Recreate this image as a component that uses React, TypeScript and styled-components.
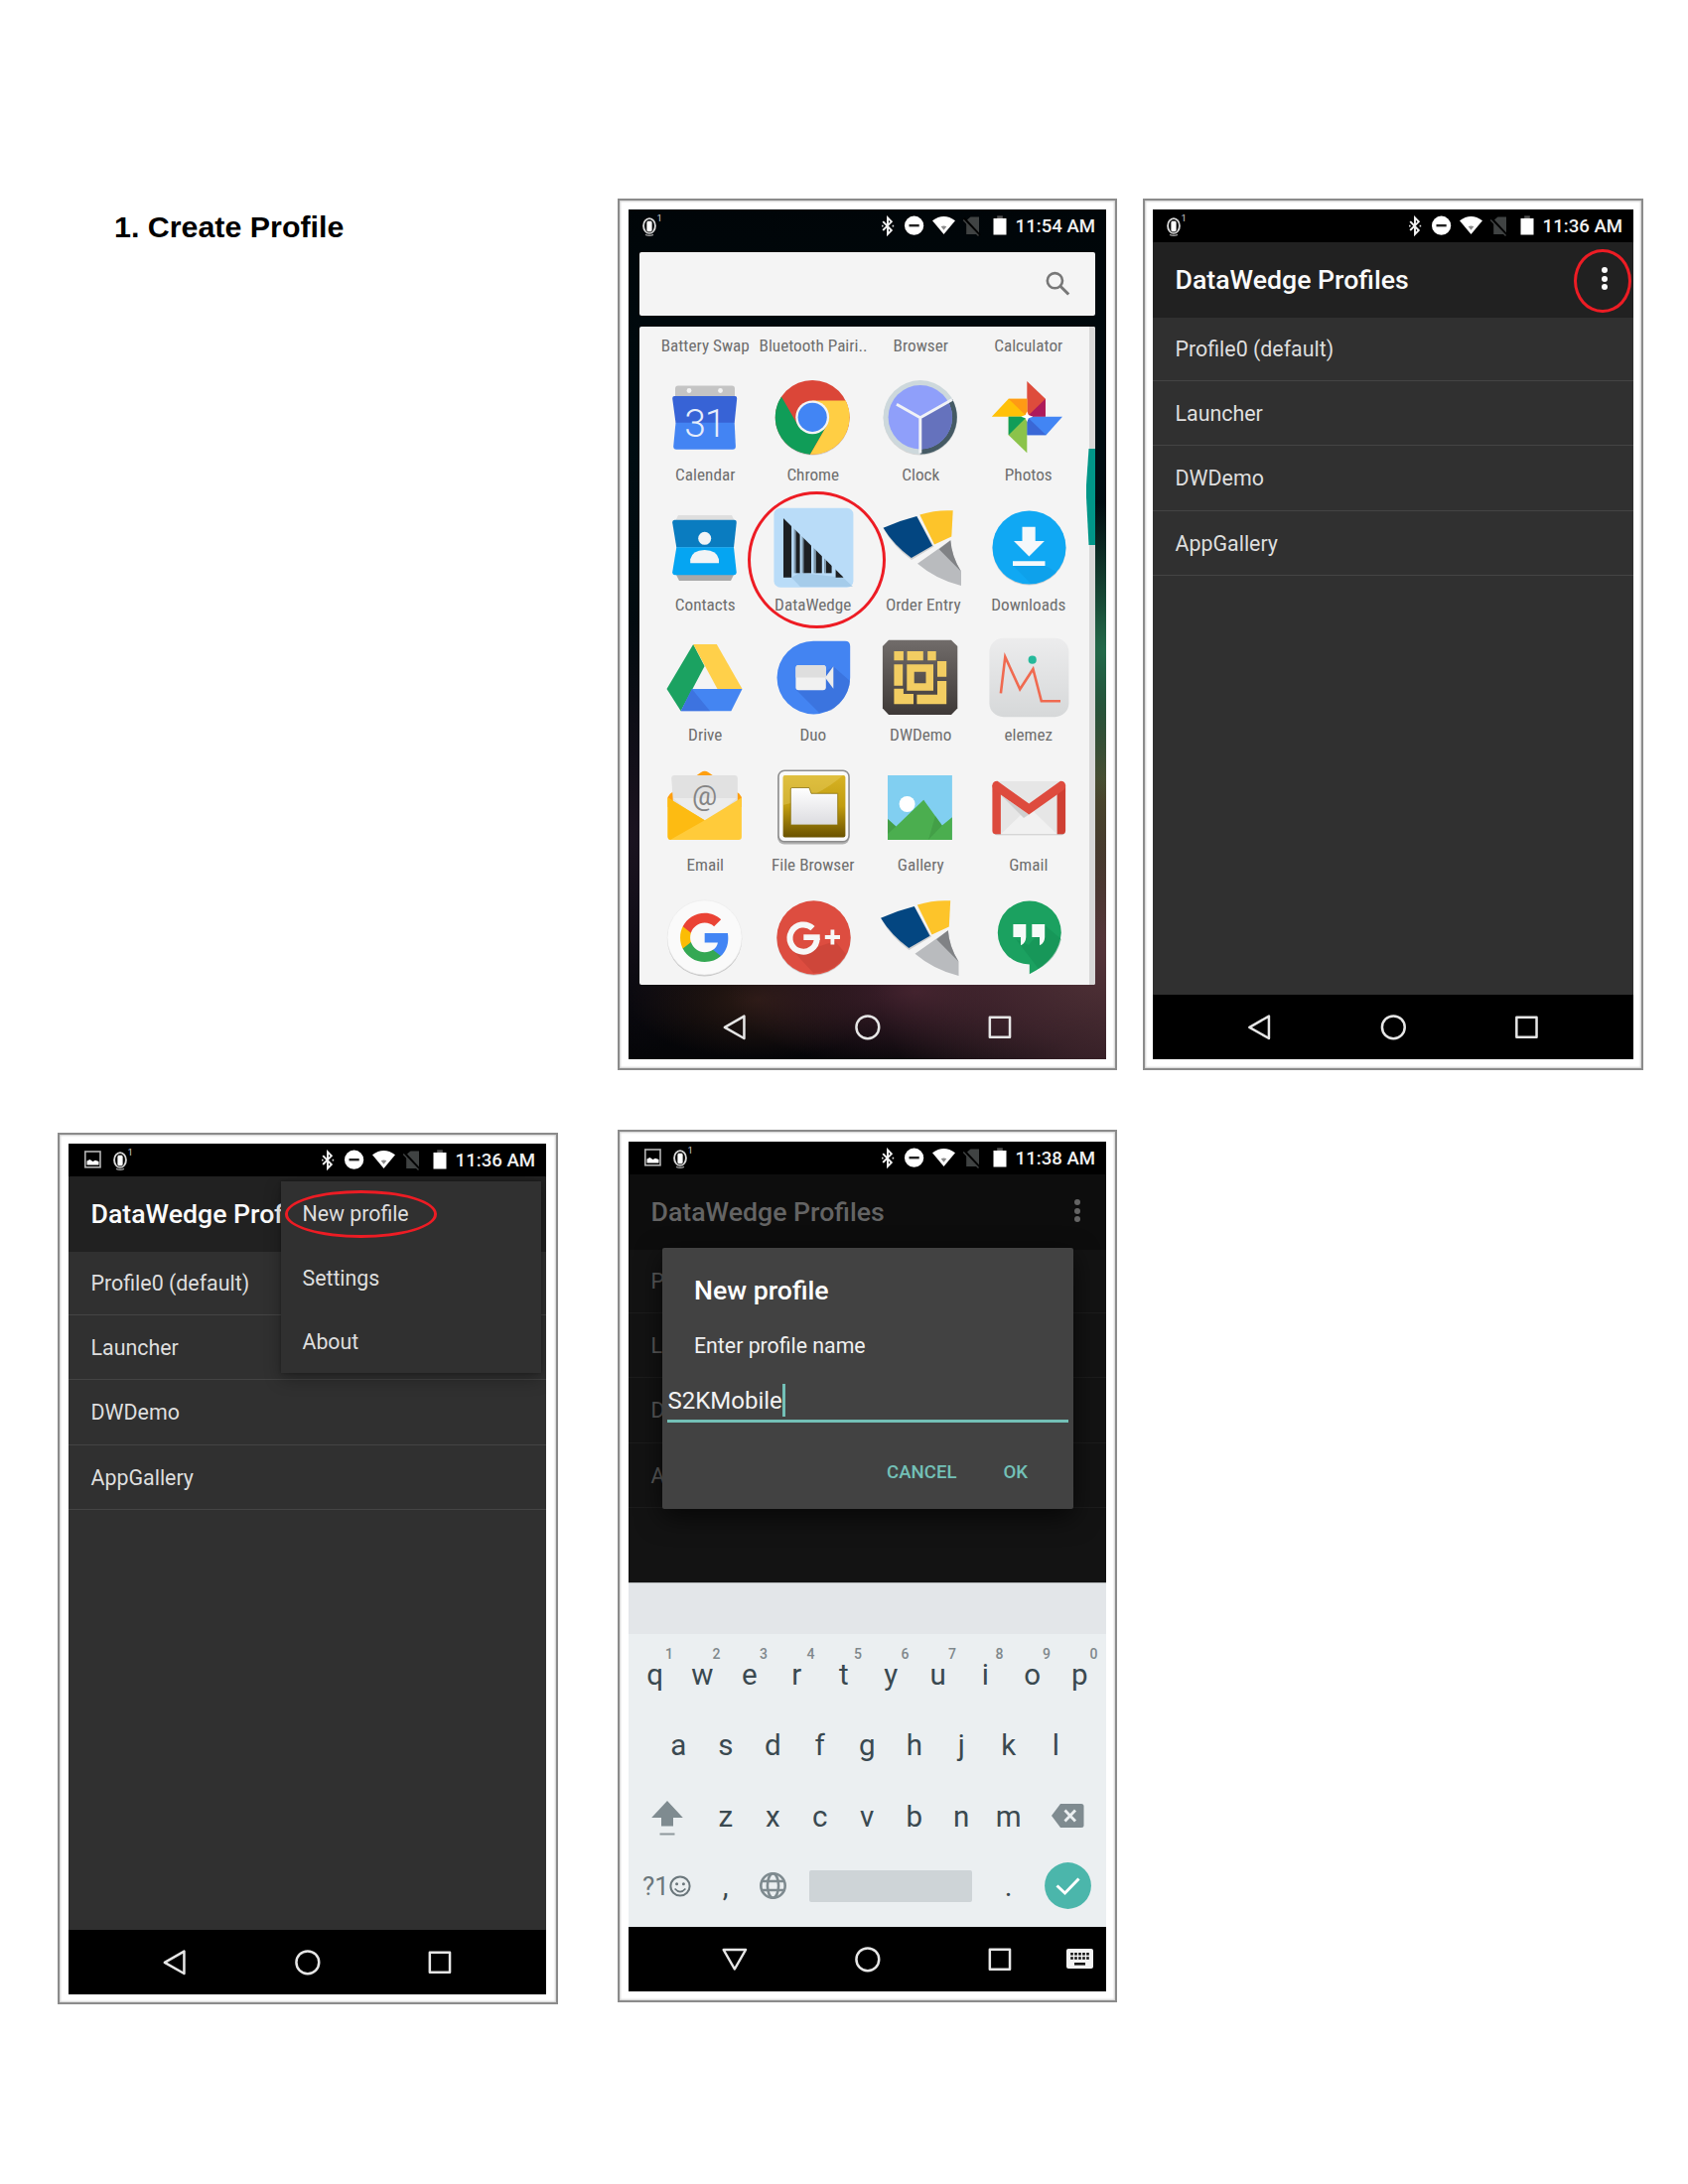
import React from "react";
import styled, { createGlobalStyle, css } from "styled-components";

const GlobalStyle = createGlobalStyle`
  html, body { margin: 0; padding: 0; background: #fff; }
  *, *::before, *::after { box-sizing: border-box; }
`;

const RED = "#ed1c24";

/* ---------- page ---------- */

const Page = styled.main`
  width: 1700px;
  height: 2200px;
  padding: 200px 0 0 58px;
  display: grid;
  grid-template-columns: 564px 529px 504px;
  grid-template-rows: 938px 881px;
  align-items: start;
  justify-items: start;
  background: #fff;
  overflow: hidden;
  font-family: Roboto, "Liberation Sans", sans-serif;
`;

const StepTitle = styled.h1`
  margin: 0;
  padding: 10px 0 0 57px;
  font: 700 30.4px/36px "Liberation Sans", Arial, sans-serif;
  color: #000;
  white-space: nowrap;
`;

const Frame = styled.figure<{ $pad: string; $drop?: number }>`
  margin: ${(p) => p.$drop ?? 0}px 0 0;
  border: 2px solid #8b8b8b;
  padding: ${(p) => p.$pad};
  background: #fff;
  box-shadow: inset 0 0 2px 1px #cfcfcf;
`;

const Screen = styled.section<{ $w: number; $h?: number; $bg?: string }>`
  position: relative;
  width: ${(p) => p.$w}px;
  height: ${(p) => p.$h ?? 856}px;
  display: flex;
  flex-direction: column;
  overflow: hidden;
  background: ${(p) => p.$bg ?? "#303030"};
`;

const Ring = styled.span<{ $x: number; $y: number; $w: number; $h: number }>`
  position: absolute;
  z-index: 5;
  left: ${(p) => p.$x}px;
  top: ${(p) => p.$y}px;
  width: ${(p) => p.$w}px;
  height: ${(p) => p.$h}px;
  border: 3px solid ${RED};
  border-radius: 50%;
`;

/* ---------- status bar ---------- */

const StatusRow = styled.header<{ $clear?: boolean }>`
  flex: none;
  height: 32.5px;
  padding: 2px 11px 0 12px;
  display: flex;
  align-items: center;
  justify-content: space-between;
  background: ${(p) => (p.$clear ? "transparent" : "#000")};
  color: #f2f2f2;
`;

const StatusGroup = styled.div`
  display: flex;
  align-items: center;
  height: 100%;
`;

const Slot = styled.span<{ $w?: number }>`
  width: ${(p) => p.$w ?? 28.3}px;
  height: 24px;
  display: flex;
  justify-content: center;
  align-items: center;
  svg { display: block; overflow: visible; }
`;

const Clock = styled.time`
  width: 82px;
  text-align: right;
  font-size: 18.6px;
  line-height: 24px;
  font-weight: 500;
  white-space: nowrap;
`;

function StatusBar({ time, picture, clear }: { time: string; picture?: boolean; clear?: boolean }) {
  return (
    <StatusRow $clear={clear}>
      <StatusGroup>
        {picture && (
          <Slot $w={31}>
            <svg width="31" height="24" viewBox="0 0 31 24">
              <rect x="4.800" y="3" width="15.200" height="15.800" fill="none" stroke="#b5b5b5" strokeWidth="1.600" />
              <path d="M6.500 16.500v-4l3-1.500 3 2 2.500-1.200 3.500 1.200v3.500z" fill="#fff" />
            </svg>
          </Slot>
        )}
        <Slot $w={24}>
          <svg width="24" height="24" viewBox="0 0 24 24">
            <ellipse cx="9" cy="11.500" rx="5.900" ry="7.400" fill="none" stroke="#d9d9d9" strokeWidth="1.900" />
            <path d="M5 20.300q4 1.800 8 0" fill="none" stroke="#9a9a9a" strokeWidth="1.400" />
            <rect x="6" y="6.300" width="6" height="11.500" rx="1.900" fill="#fff" stroke="#111" strokeWidth="0.800" />
            <text x="16.500" y="7.200" fontSize="9.500" fill="#cfcfcf" fontFamily="Roboto">1</text>
          </svg>
        </Slot>
      </StatusGroup>
      <StatusGroup>
        <Slot>
          <svg width="12" height="20" viewBox="0 0 12 20">
            <path d="M1.200 5.200 9.800 14 6 17.900V1.400L9.800 5.300 1.200 14" fill="none" stroke="#f4f4f4" strokeWidth="1.900" />
            <path d="M0 9.600h1.600M10.600 9.600h1.600" stroke="#d8d8d8" strokeWidth="1.900" />
          </svg>
        </Slot>
        <Slot>
          <svg width="22" height="20" viewBox="0 0 22 20">
            <circle cx="9.600" cy="9.200" r="9.600" fill="#fff" />
            <rect x="4.500" y="8" width="10.200" height="2.400" fill="#222" />
          </svg>
        </Slot>
        <Slot>
          <svg width="23" height="20" viewBox="0 0 23 20">
            <path d="M0 4.200Q11.500-4.400 23 4.200L11.500 18z" fill="#fff" />
            <path d="M8.700 10.300q2.800-1.600 5.600 0l-2.800 3.400z" fill="#8b8b8b" />
          </svg>
        </Slot>
        <Slot>
          <svg width="18" height="20" viewBox="0 0 18 20">
            <path d="M4.500 3 7.500.500H16V18H3.200V4.500z" fill="#404343" />
            <path d="M.8 2 16.800 19.200" stroke="#000" strokeWidth="2.600" />
            <path d="M.2 3.400 15.500 19.400" stroke="#404343" strokeWidth="1.400" />
          </svg>
        </Slot>
        <Slot>
          <svg width="14" height="20" viewBox="0 0 14 20">
            <rect x="4.200" y="-.6" width="5.600" height="3" fill="#555" />
            <rect x=".5" y="2" width="13" height="16.500" fill="#fff" />
          </svg>
        </Slot>
        <Clock>{time}</Clock>
      </StatusGroup>
    </StatusRow>
  );
}

/* ---------- navigation bar ---------- */

const NavRow = styled.nav<{ $clear?: boolean }>`
  position: relative;
  flex: none;
  height: 65px;
  margin-top: auto;
  padding: 0 40px;
  display: flex;
  align-items: center;
  background: ${(p) => (p.$clear ? "transparent" : "#000")};
  > svg { flex: 1; height: 28px; min-width: 0; }
`;

const ImeSwitch = styled.span`
  position: absolute;
  right: 13px;
  top: 22px;
  svg { display: block; }
`;

function NavBar({ ime, clear }: { ime?: boolean; clear?: boolean }) {
  const line = { fill: "none", stroke: "#e6e6e6", strokeWidth: 2.5, strokeLinejoin: "round" as const };
  return (
    <NavRow $clear={clear}>
      <svg viewBox="0 0 28 28">
        {ime ? <path d="M2.800 4h22.400L14 23.500z" {...line} /> : <path d="M23.600 2.600v22.400L4 13.800z" {...line} />}
      </svg>
      <svg viewBox="0 0 28 28"><circle cx="14" cy="13.800" r="11.400" {...line} /></svg>
      <svg viewBox="0 0 28 28"><rect x="4" y="3.800" width="20.200" height="20" {...line} /></svg>
      {ime && (
        <ImeSwitch>
          <svg width="27" height="20" viewBox="0 0 27 20">
            <rect x="0" y="0" width="27" height="20" rx="2" fill="#f2f2f2" />
            {[4, 8, 12, 16, 20].map((x) => (
              <React.Fragment key={x}>
                <rect x={x + 0.2} y="4" width="2.600" height="2.600" fill="#111" />
                <rect x={x + 0.2} y="8.200" width="2.600" height="2.600" fill="#111" />
              </React.Fragment>
            ))}
            <rect x="8" y="14" width="11" height="2.600" fill="#111" />
          </svg>
        </ImeSwitch>
      )}
    </NavRow>
  );
}

/* ---------- launcher ---------- */

const Wallpaper = css`
  background:
    radial-gradient(ellipse 150px 150px at 100% 52%, #236a4a 0%, rgba(35, 106, 74, 0.55) 45%, transparent 100%),
    radial-gradient(ellipse 160px 170px at 100% 67%, #4d4a2e 0%, transparent 100%),
    radial-gradient(ellipse 260px 240px at 104% 86%, #5a383d 0%, rgba(78, 45, 54, 0.7) 50%, transparent 100%),
    radial-gradient(ellipse 190px 80px at 60% 92%, #40202c 0%, transparent 100%),
    radial-gradient(ellipse 130px 60px at 27% 93%, #2b1a14 0%, transparent 100%),
    radial-gradient(ellipse 120px 220px at 0% 74%, #1b1320 0%, transparent 100%),
    linear-gradient(180deg, #000508 0%, #000d12 30%, #04070b 80%, #050508 100%);
`;

const HomeScreen = styled(Screen)`
  ${Wallpaper}
`;

const SearchBox = styled.div`
  flex: none;
  height: 64px;
  margin: 10.500px 11px 0;
  padding-right: 25px;
  display: flex;
  align-items: center;
  justify-content: flex-end;
  background: #f4f4f4;
  border-radius: 2px;
`;

const Drawer = styled.div`
  position: relative;
  flex: none;
  height: 663px;
  margin: 11px 11px 0;
  padding: 8.500px 13px 0 12px;
  background: #f4f4f4;
  border-radius: 2px;
  overflow: hidden;
`;

const AppGrid = styled.div`
  display: grid;
  grid-template-columns: repeat(4, 108.5px);
`;

const AppCell = styled.div`
  height: 131px;
  padding-top: 22px;
  display: flex;
  flex-direction: column;
  align-items: center;
  gap: 8px;
  svg { display: block; flex: none; width: 80px; height: 80px; overflow: visible; }
`;

const AppLabel = styled.span<{ $nudge?: number }>`
  display: block;
  height: 20px;
  padding-left: ${(p) => p.$nudge ?? 0}px;
  font-family: "Roboto Condensed", Roboto, sans-serif;
  font-stretch: 75%;
  font-size: 17.200px;
  line-height: 20px;
  color: #6e6e6e;
  text-align: center;
  white-space: nowrap;
`;

const ScrollTrack = styled.span`
  position: absolute;
  right: 0;
  top: 0;
  width: 6.500px;
  height: 100%;
  background: #d8d8d8;
`;

const ScrollThumb = styled.span`
  position: absolute;
  right: 0;
  top: 123px;
  width: 9px;
  height: 97px;
  background: #009688;
  clip-path: polygon(28% 0, 100% 0, 100% 100%, 28% 100%, 0 50%, 0 38%);
`;

const CalendarIcon = () => (
  <svg viewBox="0 0 80 80">
    <path d="M10 22V11.500q0-3 3-3h54q3 0 3 3V22z" fill="#c4c4c4" />
    <circle cx="24" cy="13.500" r="2.400" fill="#f4f4f4" /><circle cx="55.500" cy="13.500" r="2.400" fill="#f4f4f4" />
    <path d="M9 19h61.500q2 0 1.700 2.500L69.700 46H10.500L7.200 21.500Q7 19 9 19z" fill="#3763d6" />
    <path d="M10.500 45.700h59.200l1.200 24q0 3-3 3H11.200q-3 0-3-3z" fill="#4384f3" />
    <text x="39.800" y="59.500" fontSize="39" fontWeight="300" fill="#e6edfb" textAnchor="middle" fontFamily="Roboto" letterSpacing="-1">31</text>
  </svg>
);

const ChromeIcon = () => (
  <svg viewBox="0 0 80 80">
    <g transform="translate(39.200 40.300)">
      <circle cy="1" r="37.500" fill="#000" opacity=".13" />
      <circle r="37.400" fill="#db4638" />
      <path d="M-2.300 37.360A37.400 37.400 0 0 1-31.200-20.700L-14.460 8.350 14.460 8.350z" fill="#109d58" />
      <path d="M33.500-16.700A37.400 37.400 0 0 1-2.290 37.360L14.460 8.350 0-16.700z" fill="#ffce44" />
      <circle r="16.900" fill="#f4f4f4" />
      <circle r="14.600" fill="#4285f4" />
    </g>
  </svg>
);

const ClockIcon = () => (
  <svg viewBox="0 0 80 80">
    <circle cx="39.800" cy="41.300" r="37.200" fill="#000" opacity=".12" />
    <circle cx="39.800" cy="40.300" r="37.200" fill="#cdd8dc" />
    <path d="M39.800 40.500 72 22A37.200 37.200 0 0 1 39.800 77.500z" fill="#455a64" />
    <circle cx="39.800" cy="40.300" r="32.200" fill="#8f9ffa" />
    <path d="M39.800 40.500 67.700 24.300A32.200 32.200 0 0 1 39.800 72.500z" fill="#6572bd" />
    <path d="M39.800 40.700 16 27.300M39.800 40.700 72 22.500M39.800 40.700V76.500" stroke="#f0f2f6" strokeWidth="3" fill="none" />
  </svg>
);

const PhotosIcon = () => (
  <svg viewBox="0 0 80 80">
    <path d="M38.300 4 56.900 21.700V39.700H38.300z" fill="#de4c3c" />
    <path d="M38.300 39.700 56.900 21.700V39.700z" fill="#ad1a5b" />
    <path d="M38.300 39.700H74L57.500 58.300H38.300z" fill="#4285f4" />
    <path d="M38.300 39.700 57.500 58.300H38.300z" fill="#3a67d6" />
    <path d="M2.800 39.700 19.700 21.700H38.300V39.700z" fill="#ffc107" />
    <path d="M38.300 39.700 19.700 21.700H38.300z" fill="#ff9a14" />
    <path d="M19.700 39.700H38.300V76.300L19.700 58.300z" fill="#8bc34a" />
    <path d="M19.700 39.700H38.300L19.700 58.300z" fill="#109d58" />
    <path d="M38.300 34.500l1.600 3.600 4.400 1.600-4.400 1.600-1.600 3.600-1.600-3.600-4.400-1.600 4.400-1.600z" fill="#fff" />
  </svg>
);

const ContactsIcon = () => (
  <svg viewBox="0 0 80 80">
    <path d="M13 8h54l3 6H10z" fill="#dedede" />
    <path d="M10 66h60l-4 8H14z" fill="#a9a9a9" />
    <path d="M9.500 12.700h60q2.500 0 2.200 3L69 40.500H11.300L7.200 15.500q0-2.800 2.300-2.800z" fill="#0a7cc0" />
    <path d="M11.300 40.300H69l2.700 25q0 3-2.700 3H10q-2.800 0-2.800-3z" fill="#05a5f2" />
    <circle cx="39.700" cy="31.300" r="6.500" fill="#f2f4f6" />
    <path d="M25.200 56.300v-4q1.800-8.800 14.400-9.300 12.600.5 14.400 9.300v4z" fill="#f2f4f6" />
  </svg>
);

const DataWedgeIcon = () => (
  <svg viewBox="0 0 80 80">
    <defs>
      <clipPath id="wedge"><path d="M9.900 11 70.700 70.700H9.900z" /></clipPath>
    </defs>
    <rect x=".4" y=".7" width="80" height="80" rx="6.500" fill="#b9dcf8" />
    <path d="M18 70.700 26 66 70 70.700 80 80H27z" fill="#9cc4e4" opacity=".7" />
    <g clipPath="url(#wedge)" fill="#1d2023">
      <rect x="9.900" y="10" width="8.200" height="61" />
      <rect x="22.300" y="10" width="4.300" height="56.300" /><rect x="20.600" y="10" width="1.700" height="56.300" fill="#7d95a8" />
      <rect x="30.200" y="10" width="7.800" height="56.300" /><rect x="28.500" y="10" width="1.700" height="56.300" fill="#7d95a8" />
      <rect x="42.500" y="10" width="6.300" height="56.300" /><rect x="40.500" y="10" width="2" height="56.300" fill="#7d95a8" />
      <rect x="52.800" y="10" width="5.800" height="56.300" /><rect x="51" y="10" width="1.800" height="56.300" fill="#7d95a8" />
      <rect x="62.600" y="10" width="8" height="61" />
    </g>
  </svg>
);

const OrderEntryIcon = ({ shift = 0 }: { shift?: number }) => (
  <svg viewBox="0 0 80 80">
    <g transform={`translate(${shift} 0)`}>
      <path d="M3.500 22.500Q19 15 37.500 11L53.500 39.500 31 53Q13 40 3.500 22.500z" fill="#000" opacity=".15" />
      <path d="M2.500 20.700Q18.500 13.500 36.300 9L52 38.800 30.800 50.900Q13 38 2.500 20.700z" fill="#034681" />
      <path d="M39.300 7.500Q56 2.300 72.700 3.300L71.300 29.500 54 37.500z" fill="#fdc42a" />
      <path d="M37 56.800 70.300 33.300Q71.500 50 81 64.700V79Q56 73 37 56.800z" fill="#b9bbbe" />
      <path d="M58.700 42.300 70.300 33.300Q71.500 50 81 64.700z" fill="#808285" />
    </g>
  </svg>
);

const DownloadsIcon = () => (
  <svg viewBox="0 0 80 80">
    <circle cx="40.500" cy="41.500" r="37" fill="#000" opacity=".15" />
    <circle cx="40.500" cy="40.500" r="37" fill="#10a8f3" />
    <path d="M56.500 59 68 65Q57 77 42 77L24.500 59z" fill="#0b93dc" opacity=".3" />
    <path d="M33.500 19.700h13.200V34h9.200L40.400 49.500 25 34h8.500zM24 54.300h32.500V59H24z" fill="#f4f8fb" />
  </svg>
);

const DriveIcon = () => (
  <svg viewBox="0 0 80 80">
    <path d="M28.200 7 39.600 29 15.700 74.200 1.500 52z" fill="#1ba261" />
    <path d="M28.200 7H51.800L77.500 52H52.500z" fill="#ffd04a" />
    <path d="M26.800 52H77.500L66.400 74.200H15.700z" fill="#4485f2" />
    <path d="M26.800 52 45 74.200H15.700z" fill="#3868d4" opacity=".6" />
  </svg>
);

const DuoIcon = () => (
  <svg viewBox="0 0 80 80">
    <path d="M40.400 3.700H72q5.200 0 5.200 5.200V40.500a36.850 36.850 0 1 1-36.800-36.800z" fill="#4384f2" />
    <path d="M60.300 29.300 77 44Q75 62 58 73.500L46 76 23 53z" fill="#3568cf" opacity=".55" />
    <rect x="22.400" y="28" width="30.400" height="25.300" rx="3" fill="#f1f1f1" />
    <path d="M22.400 40.500V31q0-3 3-3h24.400q3 0 3 3v9.500z" fill="#dedede" />
    <path d="M52 40.500 60.300 29.300V51.700z" fill="#ececec" />
  </svg>
);

const DWDemoIcon = () => (
  <svg viewBox="0 0 80 80">
    <defs>
      <linearGradient id="dwd" x1="0" y1="0" x2="0" y2="1">
        <stop offset="0" stopColor="#716c6a" /><stop offset="1" stopColor="#3e3937" />
      </linearGradient>
    </defs>
    <path d="M8 2.700H71L77.300 9V71.500L71 78H8L1.900 71.500V9z" fill="url(#dwd)" />
    <g fill="#f2cd62">
      <path d="M13.400 14h9.500v9.300h-9.500zM26.600 14h16.200v9.300H26.600zM47.200 14h8.500v9.300h-8.500zM13.400 27.300h8.800v21.400h-8.800zM57 24h9.200v15.700H57zM13.400 51.700h9.500V57H33V67.300H13.400zM57 44h9.200V67.300H36.400v-9.600H57z" />
      <path fillRule="evenodd" d="M26.300 27.300H53V53.700H26.300zM33.700 34.700v11.600h11.800V34.700z" />
    </g>
  </svg>
);

const ElemezIcon = () => (
  <svg viewBox="0 0 80 80">
    <defs>
      <linearGradient id="elz" x1="0" y1="0" x2="0" y2="1">
        <stop offset="0" stopColor="#ececed" /><stop offset="1" stopColor="#d6d8d9" />
      </linearGradient>
    </defs>
    <rect x=".4" y=".7" width="80" height="79.500" rx="14" fill="url(#elz)" />
    <path d="M11.900 56.300 16.300 19.700 31.200 52.300 44.400 32 52.800 64.300H72" fill="none" stroke="#f06a50" strokeWidth="2.600" />
    <circle cx="43.700" cy="22.700" r="4.100" fill="#25b99b" />
  </svg>
);

const EmailIcon = () => (
  <svg viewBox="0 0 80 80">
    <path d="M2.500 30 5 26.500 36 5q3.700-2.600 7.400 0L74.500 26.500l2.400 3.500v10H2.500z" fill="#ff9f10" />
    <path d="M6.200 11q0-3 3-3h60.600q3 0 3 3v23L39.700 58 8 36z" fill="#e1e1e1" />
    <path d="M8 31H72L39.700 58z" fill="#ececec" />
    <path d="M2.500 30.500 39.700 53.300 76.900 30.500V70q0 3-3 3H5.500q-3 0-3-3z" fill="#ffcb3a" />
    <path d="M2.500 30.500 39.700 53.300 5 73q-2.500-.6-2.500-3z" fill="#fdbb12" />
    <text x="39.700" y="38" fontSize="28" fill="#858585" textAnchor="middle" fontFamily="Roboto">@</text>
  </svg>
);

const FileBrowserIcon = () => (
  <svg viewBox="0 0 80 80">
    <defs>
      <linearGradient id="olive" x1="0" y1="0" x2="0" y2="1">
        <stop offset="0" stopColor="#d8b324" /><stop offset=".5" stopColor="#c09c10" /><stop offset="1" stopColor="#6a5200" />
      </linearGradient>
      <linearGradient id="paper" x1="0" y1="0" x2="0" y2="1">
        <stop offset="0" stopColor="#ffffff" /><stop offset="1" stopColor="#dcdce0" />
      </linearGradient>
    </defs>
    <rect x="4" y="4.500" width="72.500" height="73" rx="7" fill="#000" opacity=".28" />
    <rect x="5" y="3.200" width="71" height="71.500" rx="6" fill="#fafafa" stroke="#8d8d8d" strokeWidth="1.500" />
    <rect x="9.600" y="8" width="62.800" height="62.500" rx="2" fill="url(#olive)" />
    <path d="M9.600 38V10q0-2 2-2H70q-25 22-60.400 30z" fill="#ecd36a" opacity=".4" />
    <path d="M17.300 58V22q0-1.500 1.500-1.500H36l2 5.800H64.700V58z" fill="url(#paper)" stroke="#8b7310" strokeWidth=".8" />
  </svg>
);

const GalleryIcon = () => (
  <svg viewBox="0 0 80 80">
    <rect x="7" y="8" width="64.900" height="65" fill="#81cff1" />
    <circle cx="26.600" cy="37" r="8" fill="#fff" />
    <path d="M7 52 15.400 59.500 43.200 32.700 61.800 58.500 71.900 50.300V73H7z" fill="#4bae4f" />
    <path d="M15.400 59.500 7 67V52zM61.800 58.500 48 73 55 49z" fill="#3d9443" opacity=".6" />
  </svg>
);

const GmailIcon = () => (
  <svg viewBox="0 0 80 80">
    <rect x="5" y="15" width="71" height="53.300" rx="3" fill="#000" opacity=".2" />
    <rect x="5" y="14" width="71" height="53.300" rx="3" fill="#e6e6e6" />
    <path d="M12 67.300 40.300 40 68.500 67.300z" fill="#f1f1f1" />
    <path d="M12 28 40.300 47.500 35 51z" fill="#cfcfcf" />
    <path d="M3.400 17.500 11.900 25V67.300H7q-3.600 0-3.600-3.600z" fill="#dc4a3d" />
    <path d="M77.100 17.500 68.600 25V67.300h4.900q3.600 0 3.600-3.600z" fill="#cf3f33" />
    <path d="M3.400 18.500Q3.400 13.700 8.500 13.700L40.300 36.500 72 13.700q5.100 0 5.100 4.800 0 3-2.200 4.600L40.300 47.500 5.600 23.100Q3.400 21.500 3.400 18.500z" fill="#de4b3e" />
  </svg>
);

const GoogleIcon = () => (
  <svg viewBox="0 0 80 80">
    <circle cx="39.600" cy="41.800" r="37.600" fill="#000" opacity=".18" />
    <circle cx="39.600" cy="40.400" r="37.600" fill="#fafafa" stroke="#e9e9e9" strokeWidth=".6" />
    <g transform="translate(12.800 13.500) scale(2.240)">
      <path d="M22.560 12.250c0-.78-.07-1.530-.2-2.250H12v4.260h5.920c-.26 1.370-1.040 2.530-2.210 3.310v2.770h3.570c2.080-1.920 3.280-4.740 3.280-8.090z" fill="#4285f4" />
      <path d="M12 23c2.970 0 5.460-.98 7.280-2.660l-3.570-2.770c-.98.66-2.230 1.060-3.710 1.060-2.860 0-5.290-1.930-6.160-4.530H2.180v2.840C3.990 20.530 7.700 23 12 23z" fill="#34a853" />
      <path d="M5.840 14.090c-.22-.66-.35-1.360-.35-2.090s.13-1.430.35-2.090V7.070H2.180C1.430 8.550 1 10.220 1 12s.43 3.450 1.180 4.930l2.850-2.220.81-.62z" fill="#fbbc05" />
      <path d="M12 5.380c1.620 0 3.060.56 4.210 1.640l3.150-3.150C17.450 2.090 14.970 1 12 1 7.700 1 3.990 3.470 2.180 7.070l3.660 2.840c.87-2.600 3.300-4.530 6.160-4.530z" fill="#ea4335" />
    </g>
  </svg>
);

const GooglePlusIcon = () => (
  <svg viewBox="0 0 80 80">
    <circle cx="40.500" cy="41.500" r="37.200" fill="#000" opacity=".15" />
    <circle cx="40.500" cy="40.500" r="37.200" fill="#dd4d40" />
    <path d="M18 52 40 76Q62 76 73 57L62 44 44 50z" fill="#b93d33" opacity=".4" />
    <path d="M39.500 31.200A13.600 13.600 0 1 0 43.700 41.200" fill="none" stroke="#f7f7f7" strokeWidth="6" />
    <path d="M30.300 37.300H46.700V43H30.300z" fill="#f7f7f7" />
    <path d="M51.800 40H67M59.400 32.600V47.400" stroke="#f7f7f7" strokeWidth="3.800" />
  </svg>
);

const HangoutsIcon = () => (
  <svg viewBox="0 0 80 80">
    <path d="M40.800 3.500A32 32 0 0 1 72.800 35.500Q71 62 40.800 77.300V67.500A32 32 0 0 1 40.800 3.500z" fill="#1ba160" />
    <path d="M56.200 28 72.800 42Q68 62 50 72L27 42 40 48z" fill="#128a50" opacity=".4" />
    <path d="M24.400 27H37.300V40Q37 46 32 48.300V40H24.400zM43.300 27H56.200V40Q56 46 51 48.300V40H43.300z" fill="#f6faf8" />
  </svg>
);

const HEADER_LABELS = ["Battery Swap", "Bluetooth Pairi..", "Browser", "Calculator"];

const APPS: { name?: string; nudge?: number; icon: React.ReactNode }[] = [
  { name: "Calendar", icon: <CalendarIcon /> },
  { name: "Chrome", icon: <ChromeIcon /> },
  { name: "Clock", icon: <ClockIcon /> },
  { name: "Photos", icon: <PhotosIcon /> },
  { name: "Contacts", icon: <ContactsIcon /> },
  { name: "DataWedge", icon: <DataWedgeIcon /> },
  { name: "Order Entry", nudge: 5, icon: <OrderEntryIcon /> },
  { name: "Downloads", icon: <DownloadsIcon /> },
  { name: "Drive", icon: <DriveIcon /> },
  { name: "Duo", icon: <DuoIcon /> },
  { name: "DWDemo", icon: <DWDemoIcon /> },
  { name: "elemez", icon: <ElemezIcon /> },
  { name: "Email", icon: <EmailIcon /> },
  { name: "File Browser", icon: <FileBrowserIcon /> },
  { name: "Gallery", icon: <GalleryIcon /> },
  { name: "Gmail", icon: <GmailIcon /> },
  { icon: <GoogleIcon /> },
  { icon: <GooglePlusIcon /> },
  { icon: <OrderEntryIcon shift={-2.5} /> },
  { icon: <HangoutsIcon /> },
];

function Launcher() {
  return (
    <HomeScreen $w={481}>
      <StatusBar time="11:54 AM" clear />
      <SearchBox>
        <svg width="26" height="26" viewBox="0 0 26 26">
          <circle cx="10.400" cy="9.700" r="7.600" fill="none" stroke="#777" strokeWidth="2.600" />
          <path d="M15.900 15.200 24.200 23.500" stroke="#777" strokeWidth="3" />
        </svg>
      </SearchBox>
      <Drawer>
        <AppGrid>
          {HEADER_LABELS.map((label) => (
            <AppLabel key={label}>{label}</AppLabel>
          ))}
          {APPS.map((app, i) => (
            <AppCell key={i}>
              {app.icon}
              {app.name && <AppLabel $nudge={app.nudge}>{app.name}</AppLabel>}
            </AppCell>
          ))}
        </AppGrid>
        <ScrollTrack />
        <ScrollThumb />
      </Drawer>
      <NavBar clear />
      <Ring $x={119.5} $y={283.5} $w={139} $h={138} />
    </HomeScreen>
  );
}

/* ---------- DataWedge profile list ---------- */

const AppBar = styled.div<{ $dim?: boolean }>`
  flex: none;
  height: 76.500px;
  padding: 1px 26.500px 0 22.500px;
  display: flex;
  align-items: center;
  justify-content: space-between;
  background: ${(p) => (p.$dim ? "#0d0d0d" : "#212121")};
  color: ${(p) => (p.$dim ? "#646464" : "#fafafa")};
  font-size: 26.700px;
  font-weight: 500;
  line-height: 32px;
  white-space: nowrap;
`;

const Kebab = styled.span`
  display: flex;
  flex-direction: column;
  gap: 2.400px;
  padding-bottom: 3px;
  i {
    width: 6px;
    height: 6px;
    border-radius: 50%;
    background: currentColor;
  }
`;

const ProfileList = styled.ul<{ $dim?: boolean }>`
  flex: none;
  list-style: none;
  margin: 0;
  padding: 0;
  color: ${(p) => (p.$dim ? "#5c5c5c" : "#dedede")};
  li {
    height: 65.500px;
    padding: 2px 22.500px 0;
    border-bottom: 1.500px solid ${(p) => (p.$dim ? "#1c1c1c" : "#444")};
    font-size: 21.400px;
    line-height: 62px;
    white-space: nowrap;
  }
  li:first-child { height: 63.500px; padding-top: 1px; }
`;

const PROFILES = ["Profile0 (default)", "Launcher", "DWDemo", "AppGallery"];

function ProfilesView({ dim }: { dim?: boolean }) {
  return (
    <>
      <AppBar $dim={dim}>
        <span>DataWedge Profiles</span>
        <Kebab><i /><i /><i /></Kebab>
      </AppBar>
      <ProfileList $dim={dim}>
        {PROFILES.map((p) => <li key={p}>{p}</li>)}
      </ProfileList>
    </>
  );
}

const OverflowMenu = styled.div`
  position: absolute;
  z-index: 2;
  left: 213.500px;
  top: 38px;
  width: 262px;
  height: 193px;
  padding-left: 22px;
  background: #303030;
  box-shadow: 0 6px 16px rgba(0, 0, 0, 0.3), 0 0 3px rgba(0, 0, 0, 0.25);
`;

const MenuItem = styled.div`
  height: 64.500px;
  padding-top: 1px;
  font-size: 21.300px;
  line-height: 64px;
  color: #dedede;
`;

/* ---------- new profile dialog ---------- */

const Dialog = styled.div`
  position: absolute;
  z-index: 2;
  left: 34px;
  top: 106.500px;
  width: 413.500px;
  height: 263px;
  padding: 27px 5px 0;
  display: flex;
  flex-direction: column;
  background: #424242;
  border-radius: 2px;
  box-shadow: 0 8px 26px rgba(0, 0, 0, 0.65);
`;

const DialogTitle = styled.h2`
  margin: 0 27px;
  font-size: 26.700px;
  line-height: 32px;
  font-weight: 500;
  color: #fff;
`;

const DialogMessage = styled.p`
  margin: 26.500px 27px 0;
  font-size: 21.300px;
  line-height: 28px;
  color: #f0f0f0;
`;

const Field = styled.div`
  height: 42px;
  margin: 21px 0 0;
  padding: 3px 0 0 0.500px;
  display: flex;
  align-items: flex-start;
  border-bottom: 3px solid #73c0b7;
  font-size: 24px;
  line-height: 34px;
  color: #f2f2f2;
`;

const Caret = styled.span`
  width: 3px;
  height: 33px;
  background: #73c0b7;
`;

const DialogActions = styled.div`
  display: flex;
  justify-content: flex-end;
  gap: 47px;
  padding: 36px 40.500px 0 0;
  font-size: 18.600px;
  line-height: 28px;
  font-weight: 500;
  color: #73c0b7;
`;

/* ---------- keyboard ---------- */

const Keyboard = styled.div`
  flex: none;
  height: 347.500px;
  margin-top: auto;
  background: #ebeff1;
  + nav { margin-top: 0; }
`;

const Suggestions = styled.div`
  height: 52px;
  margin-bottom: 4px;
  background: #e3e6e9;
  border-top: 1px solid #b9bcbe;
`;

const KeyRow = styled.div<{ $inset?: number; $h?: number }>`
  height: ${(p) => p.$h ?? 71}px;
  padding: 0 ${(p) => p.$inset ?? 3}px;
  display: flex;
  align-items: flex-end;
`;

const Key = styled.span<{ $w?: number; $small?: boolean }>`
  position: relative;
  flex: none;
  width: ${(p) => p.$w ?? 47.5}px;
  height: 70px;
  display: flex;
  align-items: center;
  justify-content: center;
  font-size: ${(p) => (p.$small ? 26 : 29.5)}px;
  line-height: 70px;
  color: ${(p) => (p.$small ? "#6b777c" : "#3a4950")};
  svg { display: block; overflow: visible; }
`;

const Hint = styled.sup`
  position: absolute;
  left: 34px;
  top: 7.500px;
  font-size: 14px;
  line-height: 14px;
  font-weight: 500;
  color: #7f888c;
`;

const SpaceBar = styled.span`
  width: 163.500px;
  height: 32px;
  border-radius: 2px;
  background: #ced4d7;
`;

function SoftKeyboard() {
  return (
    <Keyboard>
      <Suggestions />
      <KeyRow $h={72}>
        {"qwertyuiop".split("").map((c, i) => (
          <Key key={c}>{c}<Hint>{(i + 1) % 10}</Hint></Key>
        ))}
      </KeyRow>
      <KeyRow $inset={26.5}>
        {"asdfghjkl".split("").map((c) => <Key key={c}>{c}</Key>)}
      </KeyRow>
      <KeyRow $h={72}>
        <Key $w={71}>
          <svg width="32" height="32" viewBox="0 0 32 32">
            <path d="M16 0 31.800 17H22v8.500H10V17H.2z" fill="#7f8b90" />
            <path d="M8.500 33.500h15" stroke="#8e989c" strokeWidth="2" />
          </svg>
        </Key>
        {"zxcvbnm".split("").map((c) => <Key key={c}>{c}</Key>)}
        <Key $w={72.5}>
          <svg width="33" height="26" viewBox="0 0 33 26">
            <path d="M9 0H30q2.500 0 2.500 2.500V21.500Q32.500 24 30 24H9L0 12z" fill="#7f8b90" />
            <path d="M13.500 6.500 24 17.500M24 6.500 13.500 17.500" stroke="#ebeff1" strokeWidth="2.800" />
          </svg>
        </Key>
      </KeyRow>
      <KeyRow $h={70}>
        <Key $w={71} $small>
          ?1
          <svg width="22" height="20" viewBox="0 0 22 20">
            <circle cx="11" cy="10" r="9.600" fill="none" stroke="#6b777c" strokeWidth="2" />
            <circle cx="7.600" cy="7.800" r="1.500" fill="#6b777c" /><circle cx="14.400" cy="7.800" r="1.500" fill="#6b777c" />
            <path d="M5.600 12.500q5.400 6.200 10.800 0" fill="none" stroke="#6b777c" strokeWidth="1.800" />
          </svg>
        </Key>
        <Key>,</Key>
        <Key>
          <svg width="27" height="27" viewBox="0 0 27 27" fill="none" stroke="#7f8b90" strokeWidth="2.600">
            <circle cx="13.500" cy="13.500" r="12.200" />
            <ellipse cx="13.500" cy="13.500" rx="5.600" ry="12.200" />
            <path d="M2.500 9h22M2.500 18h22" />
          </svg>
        </Key>
        <Key $w={190}><SpaceBar /></Key>
        <Key>.</Key>
        <Key $w={72.5}>
          <svg width="47" height="47" viewBox="0 0 47 47">
            <circle cx="23.500" cy="23.500" r="23.400" fill="#4bb6ab" />
            <path d="M12.500 23.500 20.500 31 34.500 16.500" fill="none" stroke="#fff" strokeWidth="3" />
          </svg>
        </Key>
      </KeyRow>
    </Keyboard>
  );
}

/* ---------- document ---------- */

export default function App() {
  return (
    <>
      <GlobalStyle />
      <Page>
        <StepTitle>1. Create Profile</StepTitle>

        <Frame $pad="9px">
          <Launcher />
        </Frame>

        <Frame $pad="9px 8px">
          <Screen $w={484}>
            <StatusBar time="11:36 AM" />
            <ProfilesView />
            <NavBar />
            <Ring $x={423.5} $y={39.5} $w={58} $h={64.5} />
          </Screen>
        </Frame>

        <Frame $pad="9px 10px 8px 9px" $drop={3}>
          <Screen $w={481} $h={857}>
            <StatusBar time="11:36 AM" picture />
            <ProfilesView />
            <NavBar />
            <OverflowMenu>
              <MenuItem>New profile</MenuItem>
              <MenuItem>Settings</MenuItem>
              <MenuItem>About</MenuItem>
            </OverflowMenu>
            <Ring $x={218} $y={47} $w={153} $h={47.5} />
          </Screen>
        </Frame>

        <Frame $pad="10px 9px 9px">
          <Screen $w={481} $bg="#131313">
            <StatusBar time="11:38 AM" picture />
            <ProfilesView dim />
            <Dialog>
              <DialogTitle>New profile</DialogTitle>
              <DialogMessage>Enter profile name</DialogMessage>
              <Field>S2KMobile<Caret /></Field>
              <DialogActions>
                <span>CANCEL</span>
                <span>OK</span>
              </DialogActions>
            </Dialog>
            <SoftKeyboard />
            <NavBar ime />
          </Screen>
        </Frame>
      </Page>
    </>
  );
}
